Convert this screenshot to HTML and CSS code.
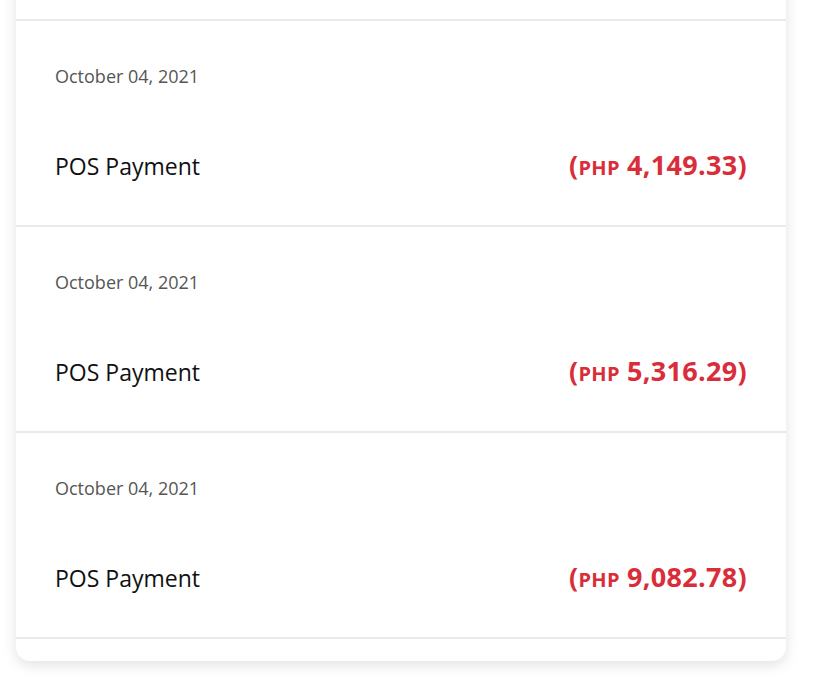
FILE: index.html
```html
<!DOCTYPE html>
<html>
<head>
<meta charset="utf-8">
<link rel="stylesheet" href="styles.css">
</head>
<body>
<div class="card">
  <div class="row row-top"></div>
  <div class="row">
    <div class="date">October 04, 2021</div>
    <div class="line">
      <span class="title">POS Payment</span>
      <span class="amount">(<span class="cur">PHP</span> 4,149.33)</span>
    </div>
  </div>
  <div class="row">
    <div class="date">October 04, 2021</div>
    <div class="line">
      <span class="title">POS Payment</span>
      <span class="amount">(<span class="cur">PHP</span> 5,316.29)</span>
    </div>
  </div>
  <div class="row">
    <div class="date">October 04, 2021</div>
    <div class="line">
      <span class="title">POS Payment</span>
      <span class="amount">(<span class="cur">PHP</span> 9,082.78)</span>
    </div>
  </div>
  <div class="row-end"></div>
</div>
</body>
</html>
```

FILE: styles.css
```css
html, body {
  margin: 0;
  padding: 0;
  background: #ffffff;
}
body {
  font-family: "Open Sans", "Noto Sans", sans-serif;
  width: 815px;
  height: 680px;
  overflow: hidden;
}
.card {
  margin-left: 16px;
  width: 770px;
  margin-top: -20px;
  background: #ffffff;
  border-radius: 0 0 14px 14px;
  box-shadow: 0 4px 14px rgba(0, 0, 0, 0.12);
}
.row {
  border-bottom: 2px solid #e9e9e9;
  padding: 43px 39px 42px 39px;
}
.row-top {
  height: 39px;
  padding: 0;
}
.date {
  font-size: 18px;
  line-height: 24px;
  color: #555555;
  letter-spacing: 0;
}
.line {
  margin-top: 62px;
  display: flex;
  justify-content: space-between;
  align-items: baseline;
  line-height: 30px;
}
.title {
  font-size: 23px;
  color: #111111;
  letter-spacing: 0;
}
.amount {
  font-size: 27px;
  font-weight: 700;
  color: #d92d3a;
  letter-spacing: 0.3px;
}
.cur {
  font-size: 20px;
}
.row-end {
  height: 22px;
}
```
